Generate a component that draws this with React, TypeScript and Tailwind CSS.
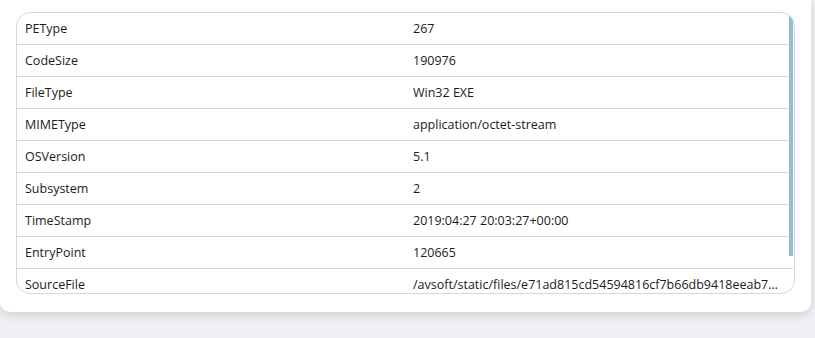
const rows: [string, string][] = [
  ["PEType", "267"],
  ["CodeSize", "190976"],
  ["FileType", "Win32 EXE"],
  ["MIMEType", "application/octet-stream"],
  ["OSVersion", "5.1"],
  ["Subsystem", "2"],
  ["TimeStamp", "2019:04:27 20:03:27+00:00"],
  ["EntryPoint", "120665"],
  ["SourceFile", "/avsoft/static/files/e71ad815cd54594816cf7b66db9418eeab7384cd7fc8b9e1a3f0c2d1"],
];

export default function App() {
  return (
    <div className="h-[338px] w-[815px] overflow-hidden bg-[#eef0f3] font-['Open_Sans','Noto_Sans',sans-serif] text-[12.5px] text-[#1b1b1b]">
      <div className="w-[811px] rounded-b-[10px] bg-white px-4 pb-[18px] pt-3 shadow-[0_3px_10px_rgba(0,0,0,0.14)]">
        <div className="relative h-[282px] overflow-hidden rounded-[14px] border border-[#d6d6d6]">
          <div className="w-[776px]">
            {rows.map(([k, v]) => (
              <div key={k} className="grid h-[32px] grid-cols-2 items-center border-b border-[#d6d6d6] pt-[2px]">
                <div className="truncate px-2">{k}</div>
                <div className="truncate px-2">{v}</div>
              </div>
            ))}
          </div>
          <div className="absolute right-[1px] top-[3px] h-[240px] w-[4px] bg-[#8fbfd2]" />
        </div>
      </div>
    </div>
  );
}
